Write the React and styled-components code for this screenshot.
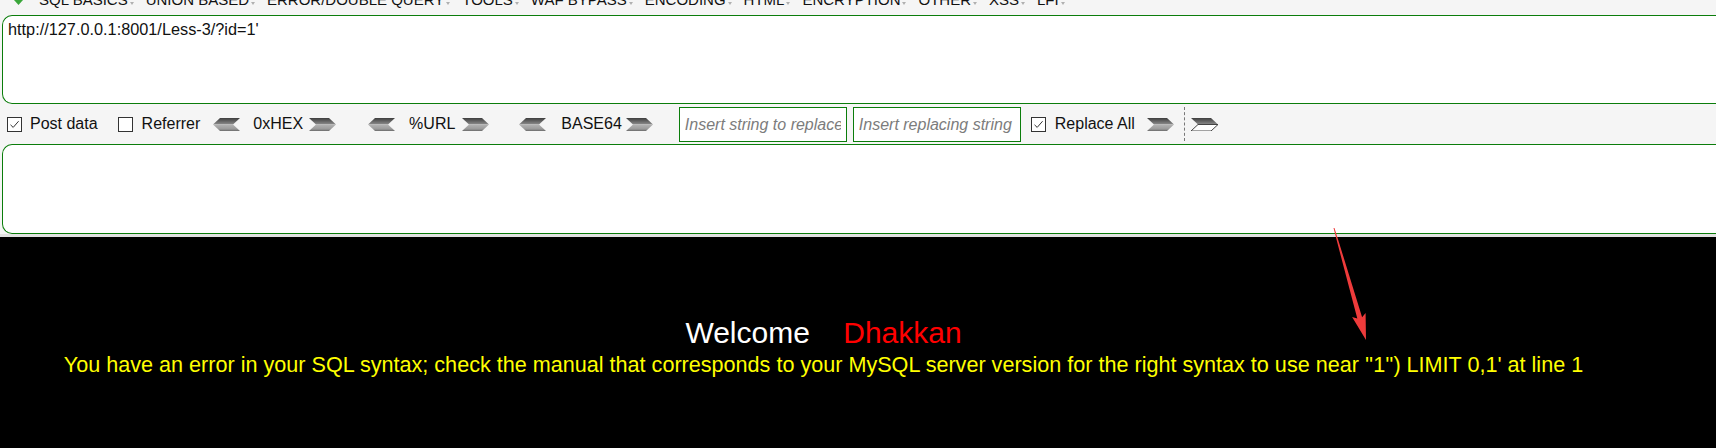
import styled, { createGlobalStyle } from 'styled-components';

const GlobalStyle = createGlobalStyle`
  html, body {
    margin: 0;
    padding: 0;
    background: #000;
  }
  body {
    font-family: "Liberation Sans", Arial, sans-serif;
    overflow: hidden;
  }
`;

const menuItems = [
  'SQL BASICS', 'UNION BASED', 'ERROR/DOUBLE QUERY', 'TOOLS', 'WAF BYPASS',
  'ENCODING', 'HTML', 'ENCRYPTION', 'OTHER', 'XSS', 'LFI',
];

function Arrow({ dir = 'left', hollow = false }) {
  const id = `g-${dir}-${hollow ? 'h' : 's'}`;
  const upper = dir === 'left' ? '0,6.5 7,0 27,0 20,6.5' : '0,0 20,0 27,6.5 7,6.5';
  const lower = dir === 'left' ? '0,6.5 20,6.5 27,13 7,13' : '7,6.5 27,6.5 20,13 0,13';
  return (
    <svg width="27" height="13" viewBox="0 0 27 13">
      <defs>
        <linearGradient id={`${id}-top`} x1="0" y1="0" x2="0" y2="1">
          <stop offset="0" stopColor="#3e3e3e" />
          <stop offset="1" stopColor="#8c8c8c" />
        </linearGradient>
        <linearGradient id={`${id}-bot`} x1="0" y1="0" x2="0" y2="1">
          <stop offset="0" stopColor="#b4b4b4" />
          <stop offset="0.7" stopColor="#9a9a9a" />
          <stop offset="1" stopColor="#6a6a6a" />
        </linearGradient>
      </defs>
      <polygon points={upper} fill={`url(#${id}-top)`} />
      {hollow ? (
        <polygon points={lower} fill="#fff" stroke="#444" strokeWidth="1" />
      ) : (
        <polygon points={lower} fill={`url(#${id}-bot)`} />
      )}
    </svg>
  );
}

function Check({ checked }) {
  return (
    <Box>
      {checked && (
        <svg width="13" height="13" viewBox="0 0 13 13">
          <path d="M2.5 6.8 L5.2 9.4 L10.6 3.2" fill="none" stroke="#333" strokeWidth="1" />
        </svg>
      )}
    </Box>
  );
}

export default function App() {
  return (
    <Page>
      <GlobalStyle />
      <HackBar>
        <MenuBar>
          <MenuRow>
            <LoadIcon width="9" height="6" viewBox="0 0 9 6">
              <polygon points="0,0 9,0 4.5,5" fill="#3aa63a" />
            </LoadIcon>
            {menuItems.map((m) => (
              <MenuItem key={m}>{m}</MenuItem>
            ))}
          </MenuRow>
        </MenuBar>

        <UrlArea defaultValue="http://127.0.0.1:8001/Less-3/?id=1'" spellCheck={false} />

        <Toolbar>
          <Item $ml={5}><Check checked /></Item>
          <Label $ml={8}>Post data</Label>
          <Item $ml={20}><Check /></Item>
          <Label $ml={9}>Referrer</Label>
          <Item $ml={13}><Arrow dir="left" /></Item>
          <Label $ml={13}>0xHEX</Label>
          <Item $ml={6}><Arrow dir="right" /></Item>
          <Item $ml={32}><Arrow dir="left" /></Item>
          <Label $ml={14}>%URL</Label>
          <Item $ml={7}><Arrow dir="right" /></Item>
          <Item $ml={30}><Arrow dir="left" /></Item>
          <Label $ml={15}>BASE64</Label>
          <Item $ml={4}><Arrow dir="right" /></Item>
          <ReplaceInput $ml={26} placeholder="Insert string to replace" />
          <ReplaceInput $ml={6} placeholder="Insert replacing string" />
          <Item $ml={10}><Check checked /></Item>
          <Label $ml={9}>Replace All</Label>
          <Item $ml={12}><Arrow dir="right" /></Item>
          <Separator $ml={10} />
          <Item $ml={6}><Arrow dir="right" hollow /></Item>
        </Toolbar>

        <PostArea spellCheck={false} />
      </HackBar>

      <Content>
        <Welcome>
          {'Welcome\u00a0\u00a0\u00a0'}
          <Name>{' Dhakkan'}</Name>
        </Welcome>
        <ErrorLine>
          You have an error in your SQL syntax; check the manual that corresponds to your MySQL server version for the right syntax to use near ''1'') LIMIT 0,1' at line 1
        </ErrorLine>
      </Content>

      <Annotation width="1716" height="448" viewBox="0 0 1716 448">
        <polygon
          points="1334.5,227.9 1362.1,317.2 1365.6,313.1 1366,340 1352.1,316.9 1357.3,318.6 1333.5,228.1"
          fill="#ee3b3b"
        />
      </Annotation>
    </Page>
  );
}

const Page = styled.div`
  position: relative;
  width: 1716px;
  height: 448px;
  overflow: hidden;
  background: #000;
`;

const HackBar = styled.div`
  background: #f5f5f5;
  padding-left: 2px;
  border-bottom: 3px solid #e2e2e2;
`;

const MenuBar = styled.div`
  height: 15px;
  overflow: hidden;
`;

const MenuRow = styled.div`
  display: flex;
  align-items: flex-start;
  gap: 18px;
  margin-top: -8px;
  font-size: 15px;
  line-height: 16px;
  color: #111;
`;

const LoadIcon = styled.svg`
  margin-left: 12px;
  margin-right: -2px;
  margin-top: 8px;
  flex: none;
`;

const MenuItem = styled.span`
  position: relative;
  white-space: nowrap;

  &::after {
    content: '';
    position: absolute;
    right: -6px;
    bottom: 3px;
    border-left: 2px solid transparent;
    border-right: 2px solid transparent;
    border-top: 3px solid #b0b0b0;
  }
`;

const TextBox = styled.textarea`
  display: block;
  box-sizing: border-box;
  width: 100%;
  margin: 0;
  border: 1px solid #0b7d0b;
  border-right: none;
  border-radius: 10px 0 0 10px;
  background: #fff;
  font-family: "Liberation Sans", Arial, sans-serif;
  font-size: 16.3px;
  line-height: 19px;
  color: #111;
  padding: 4px 5px;
  resize: none;
  outline: none;
  overflow: hidden;
`;

const UrlArea = styled(TextBox)`
  height: 89px;
`;

const PostArea = styled(TextBox)`
  height: 90px;
`;

const Toolbar = styled.div`
  display: flex;
  align-items: center;
  height: 40px;
  font-size: 16px;
  color: #111;
  white-space: nowrap;
`;

const Item = styled.span`
  display: flex;
  align-items: center;
  flex: none;
  margin-left: ${(p) => p.$ml || 0}px;
`;

const Label = styled.span`
  flex: none;
  margin-left: ${(p) => p.$ml || 0}px;
`;

const Box = styled.span`
  display: flex;
  align-items: center;
  justify-content: center;
  box-sizing: border-box;
  width: 15px;
  height: 15px;
  border: 1px solid #333;
  background: #fff;
`;

const ReplaceInput = styled.input`
  flex: none;
  box-sizing: border-box;
  width: 168px;
  height: 35px;
  margin: 1px 0 0 ${(p) => p.$ml || 0}px;
  padding: 0 5px;
  border: 1px solid #0b7d0b;
  border-radius: 0;
  background: #fff;
  font-family: "Liberation Sans", Arial, sans-serif;
  font-size: 16px;
  outline: none;

  &::placeholder {
    color: #7c7c7c;
    font-style: italic;
    opacity: 1;
  }
`;

const Separator = styled.span`
  flex: none;
  width: 0;
  height: 34px;
  border-left: 1px dashed #777;
  margin-left: ${(p) => p.$ml || 0}px;
`;

const Content = styled.div`
  padding: 79px 69px 0 0;
  text-align: center;
`;

const Welcome = styled.div`
  font-size: 30px;
  line-height: 34px;
  color: #fff;
`;

const Name = styled.span`
  color: #ff0000;
`;

const ErrorLine = styled.div`
  margin-top: 2px;
  font-size: 21.6px;
  line-height: 25px;
  color: #ffff00;
  white-space: nowrap;
`;

const Annotation = styled.svg`
  position: absolute;
  left: 0;
  top: 0;
  pointer-events: none;
`;
